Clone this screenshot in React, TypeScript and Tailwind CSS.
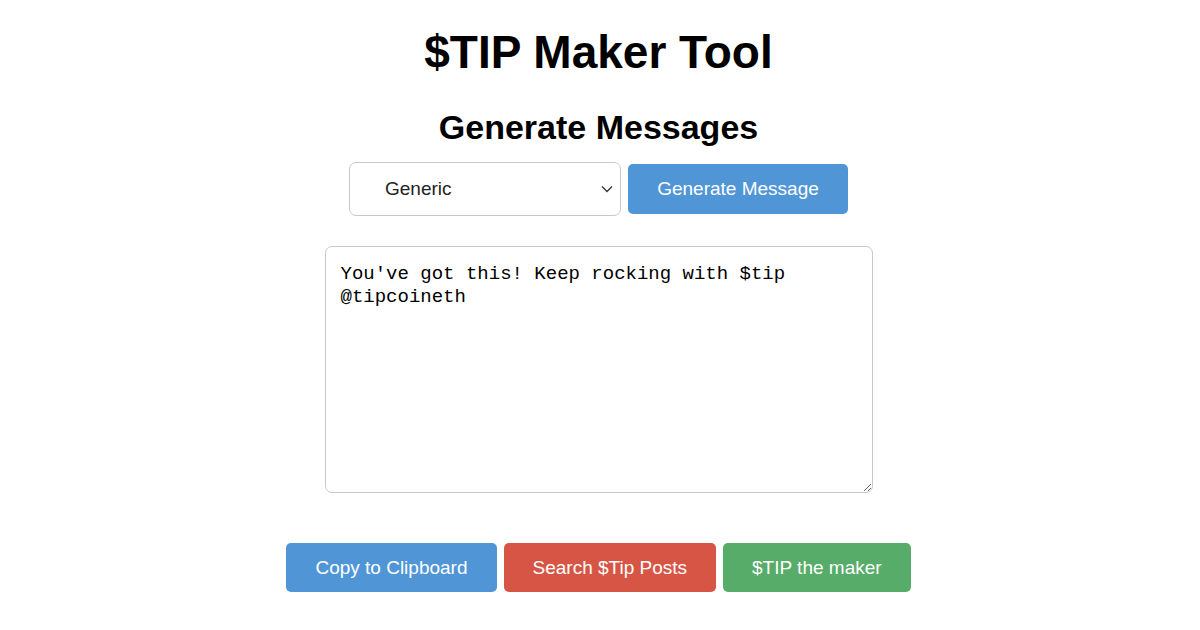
import { useState } from 'react';

export default function App() {
  const [kind, setKind] = useState('Generic');
  const [msg, setMsg] = useState("You've got this! Keep rocking with $tip @tipcoineth");

  const btn = 'h-[49px] px-[29px] rounded-[5px] text-white text-[19px] leading-none';

  return (
    <div className="min-h-screen bg-white pr-[3px] flex flex-col items-center font-['Liberation_Sans',Arial,sans-serif] text-black">
      <h1 className="mt-[26px] text-[46px] leading-[52px] font-bold">$TIP Maker Tool</h1>
      <h2 className="mt-[29px] text-[34px] leading-[40px] font-bold">Generate Messages</h2>

      <div className="mt-[15px] flex items-center gap-[7px]">
        <div className="relative">
          <select
            value={kind}
            onChange={(e) => setKind(e.target.value)}
            className="appearance-none w-[272px] h-[54px] pl-[35px] pr-10 bg-white border border-[#c8c8c8] rounded-[7px] text-[19px] text-[#222]"
          >
            <option>Generic</option>
            <option>Motivational</option>
            <option>Thank you</option>
          </select>
          <svg className="absolute right-[8px] top-[23px] pointer-events-none" width="12" height="8" viewBox="0 0 12 8" fill="none">
            <path d="M1 1.5 6 6.5 11 1.5" stroke="#333" strokeWidth="1.3" />
          </svg>
        </div>
        <button className="w-[220px] h-[50px] rounded-[5px] bg-[#5096d7] text-white text-[19px]">Generate Message</button>
      </div>

      <textarea
        value={msg}
        onChange={(e) => setMsg(e.target.value)}
        className="mt-[30px] w-[548px] h-[247px] px-[15px] pt-[16px] border border-[#c8c8c8] rounded-[7px] font-['Liberation_Mono','Courier_New',monospace] text-[19px] leading-[23px] text-black outline-none"
      />

      <div className="mt-[50px] flex gap-[7px]">
        <button className={`${btn} bg-[#5096d7]`}>Copy to Clipboard</button>
        <button className={`${btn} bg-[#d75545]`}>Search $Tip Posts</button>
        <button className={`${btn} bg-[#56ac68]`}>$TIP the maker</button>
      </div>
    </div>
  );
}
